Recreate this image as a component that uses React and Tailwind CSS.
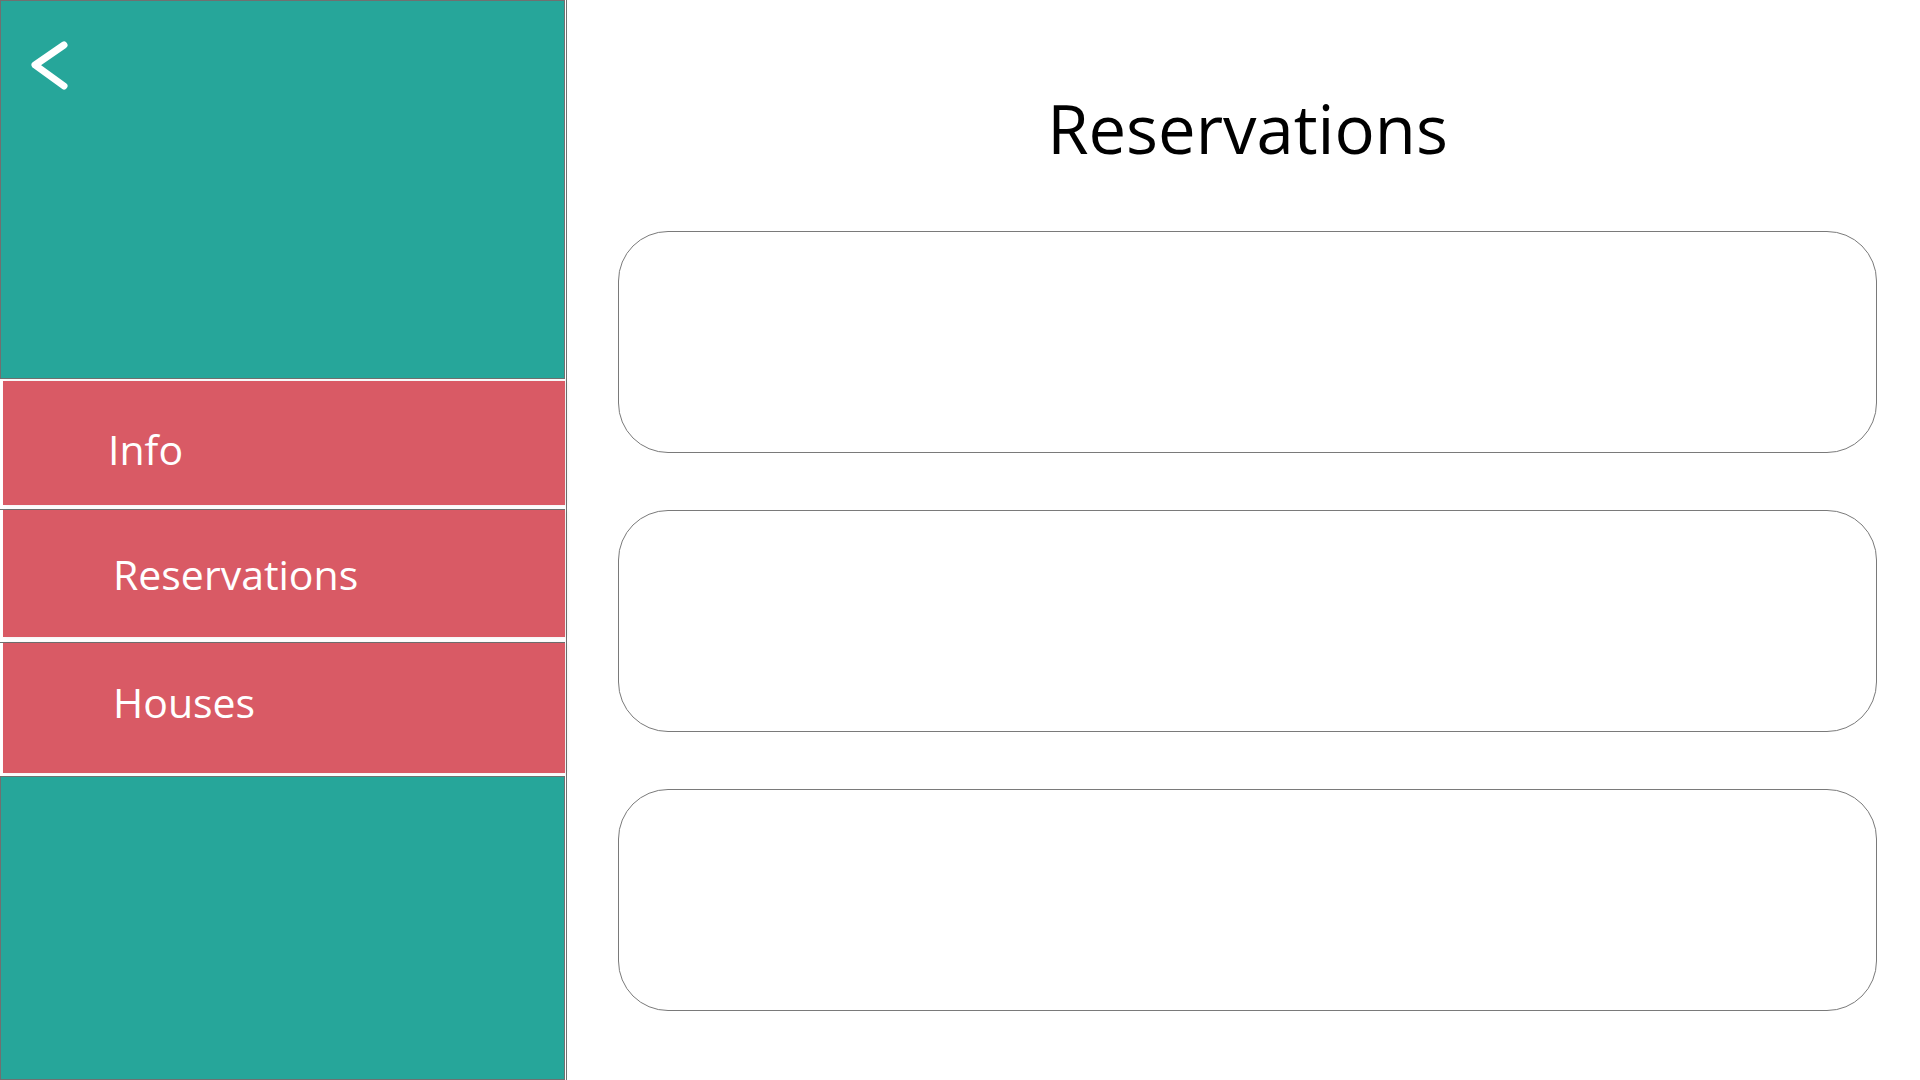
import React from 'react';

const menu = [
  { label: 'Info', box: 'h-[124px] pt-[14px] pl-[105px]', spacer: '', gap: 'mt-[2px]' },
  { label: 'Reservations', box: 'h-[127px] pt-[2px] pl-[110px]', spacer: 'h-[4px]', gap: '' },
  { label: 'Houses', box: 'h-[130px] pb-[10px] pl-[110px]', spacer: 'h-[5px]', gap: '' }
];

const Sidebar = () => (
  <aside className="w-[567px] shrink-0 h-full flex flex-col border-r border-[#707070]">
    <div className="w-[565px] h-[379px] shrink-0 border border-[#707070] bg-[#26a69a] pl-[27px] pt-[38px]">
      <svg width="44" height="52" viewBox="0 0 44 52" fill="none">
        <polyline points="36,6 7,26 36,47" stroke="#ffffff" strokeWidth="7" strokeLinecap="round" strokeLinejoin="round" />
      </svg>
    </div>
    {menu.map(item => (
      <div key={item.label} className={item.gap}>
        {item.spacer && (
          <>
            <div className={item.spacer} />
            <div className="h-px w-[565px] bg-[#707070]" />
          </>
        )}
        <div
          className={`ml-[3px] w-[562px] flex items-center bg-[#d95a65] text-white text-[41px] shadow-[2px_0_4px_rgba(0,0,0,0.08)] ${item.box}`}
        >
          {item.label}
        </div>
      </div>
    ))}
    <div className="h-[3px] shrink-0" />
    <div className="w-[565px] flex-1 border border-[#707070] bg-[#26a69a]" />
  </aside>
);

const App = () => {
  return (
    <div className="flex w-full h-screen bg-white overflow-hidden" style={{ fontFamily: '"Open Sans", "Noto Sans", sans-serif' }}>
      <Sidebar />
      <main className="flex-1 flex flex-col pl-[51px] pr-[43px]">
        <h1 className="mt-[83px] text-center text-[67px] leading-[91px] text-black font-normal">Reservations</h1>
        <div className="mt-[57px] flex flex-col gap-[57px]">
          {[0, 1, 2].map(i => (
            <div key={i} className="h-[222px] rounded-[50px] border border-[#7a7a7a] bg-white" />
          ))}
        </div>
      </main>
    </div>
  );
};

export default App;
